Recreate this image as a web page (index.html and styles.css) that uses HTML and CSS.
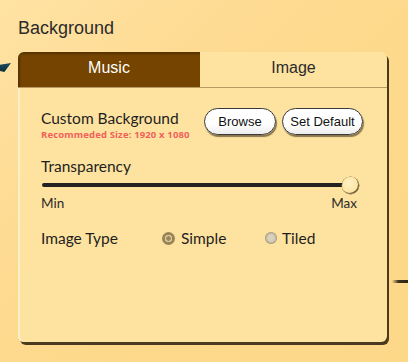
FILE: index.html
```html
<!DOCTYPE html>
<html>
<head>
<meta charset="utf-8">
<link rel="stylesheet" href="styles.css">
</head>
<body>
<div class="page">
  <div class="deco-left"></div>
  <div class="deco-right"></div>
  <h1 class="title">Background</h1>
  <div class="panel">
    <div class="tabs">
      <div class="tab active">Music</div>
      <div class="tab">Image</div>
    </div>
    <div class="body">
      <div class="row-custom">
        <div class="custom-label">
          <div class="label">Custom Background</div>
          <div class="hint">Recommeded Size: 1920 x 1080</div>
        </div>
        <div class="buttons">
          <button class="btn btn-browse">Browse</button>
          <button class="btn btn-default">Set Default</button>
        </div>
      </div>
      <div class="label trans-label">Transparency</div>
      <div class="slider">
        <div class="track"></div>
        <div class="knob"></div>
      </div>
      <div class="minmax"><span>Min</span><span>Max</span></div>
      <div class="row-type">
        <div class="label type-label">Image Type</div>
        <div class="radio on"><span class="dot"></span><span>Simple</span></div>
        <div class="radio off"><span class="dot"></span><span>Tiled</span></div>
      </div>
    </div>
  </div>
</div>
</body>
</html>
```
FILE: styles.css
```css
* { box-sizing: border-box; }
html, body { margin: 0; padding: 0; }
body {
  width: 408px;
  height: 362px;
  overflow: hidden;
  background: linear-gradient(135deg, #ffe3a4 0%, #fedb93 30%, #fdd98b 60%, #fdd889 100%);
}
.page {
  position: relative;
  width: 408px;
  height: 362px;
  padding: 17px 0 0 18px;
}
.deco-left {
  position: absolute;
  left: 0;
  top: 63px;
  width: 11px;
  height: 9px;
  background: linear-gradient(180deg, #1b4a5a 0%, #0f2e3a 100%);
  clip-path: polygon(0 20%, 100% 0, 40% 100%, 0 90%);
}
.deco-right {
  position: absolute;
  right: 0;
  top: 280px;
  width: 16px;
  height: 3px;
  background: linear-gradient(90deg, rgba(60,45,20,0) 0%, #3f3220 40%, #2e2414 100%);
}
.title {
  margin: 0;
  font-family: "Liberation Sans", Arial, sans-serif;
  font-weight: normal;
  font-size: 18px;
  line-height: 22px;
  color: #2b2b2b;
  height: 35px;
}
.panel {
  width: 369px;
  height: 290px;
  background: #fee3a0;
  border-radius: 6px;
  box-shadow: 2px 3px 0 #4b3a1c, inset 2px 0 1px #fff0c8;
  overflow: hidden;
}
.tabs {
  display: flex;
  height: 36px;
  border-bottom: 1px solid #b99a64;
}
.tab {
  flex: 0 0 auto;
  width: 187px;
  display: flex;
  align-items: center;
  justify-content: center;
  font-family: "Liberation Sans", Arial, sans-serif;
  font-size: 16px;
  color: #2b2b2b;
  padding-bottom: 4px;
}
.tab.active {
  width: 182px;
  background: #744400;
  color: #fff;
  box-shadow: inset 2px 2px 2px rgba(0,0,0,0.25);
}
.body {
  padding: 20px 24px 0 23px;
}
.row-custom {
  display: flex;
  justify-content: space-between;
  align-items: flex-start;
}
.custom-label { padding-top: 1px; }
.label {
  font-family: Lato, "Open Sans", sans-serif;
  font-size: 15.5px;
  line-height: 18px;
  color: #1e1e1e;
}
.hint {
  font-family: "Open Sans", sans-serif;
  font-weight: bold;
  font-size: 9.5px;
  line-height: 11px;
  color: #f0605a;
  letter-spacing: 0.15px;
  margin-top: 2px;
}
.buttons {
  display: flex;
  gap: 6px;
}
.btn {
  height: 27px;
  border: 1px solid #3a3a3a;
  border-radius: 14px;
  background: linear-gradient(180deg, #ffffff 0%, #ffffff 60%, #ececec 100%);
  box-shadow: 1px 2px 1px rgba(40,30,10,0.55);
  font-family: "Liberation Sans", Arial, sans-serif;
  font-size: 13px;
  color: #111;
  padding: 0;
}
.btn-browse { width: 72px; }
.btn-default { width: 81px; }
.trans-label { margin-top: 17px; }
.slider {
  position: relative;
  height: 16px;
  margin-top: 2px;
  width: 317px;
}
.track {
  position: absolute;
  left: 1px;
  top: 6px;
  width: 305px;
  height: 4px;
  border-radius: 2px;
  background: #222;
}
.knob {
  position: absolute;
  left: 301px;
  top: 0;
  width: 17px;
  height: 17px;
  border-radius: 50%;
  background: radial-gradient(circle at 40% 35%, #fff1c4 0%, #fde6a6 55%, #f2d68c 100%);
  box-shadow: inset -1px -1px 0 #6b5a34, 0 0 0 0.5px #8a7444;
}
.minmax {
  display: flex;
  justify-content: space-between;
  width: 316px;
  font-family: Lato, "Open Sans", sans-serif;
  font-size: 13.5px;
  line-height: 16px;
  color: #2a2a2a;
  margin-top: 2px;
}
.row-type {
  display: flex;
  align-items: center;
  margin-top: 18px;
}
.type-label { width: 121px; }
.radio {
  display: flex;
  align-items: center;
  font-family: Lato, "Open Sans", sans-serif;
  font-size: 15.5px;
  line-height: 18px;
  color: #1e1e1e;
}
.radio .dot {
  width: 13px;
  height: 13px;
  border-radius: 50%;
  margin-right: 6px;
}
.radio.on { width: 103px; }
.radio.on .dot {
  background: radial-gradient(circle, #9c8756 0 2px, #d9c9a0 2.5px 3.5px, #9a8454 4px);
}
.radio.off .dot {
  width: 12px;
  height: 12px;
  margin-right: 5px;
  background: radial-gradient(circle, #d8d1bb 0 3px, #c7bfa6 4.5px);
  box-shadow: inset 0 0 0 1px #b0a488;
}
```
